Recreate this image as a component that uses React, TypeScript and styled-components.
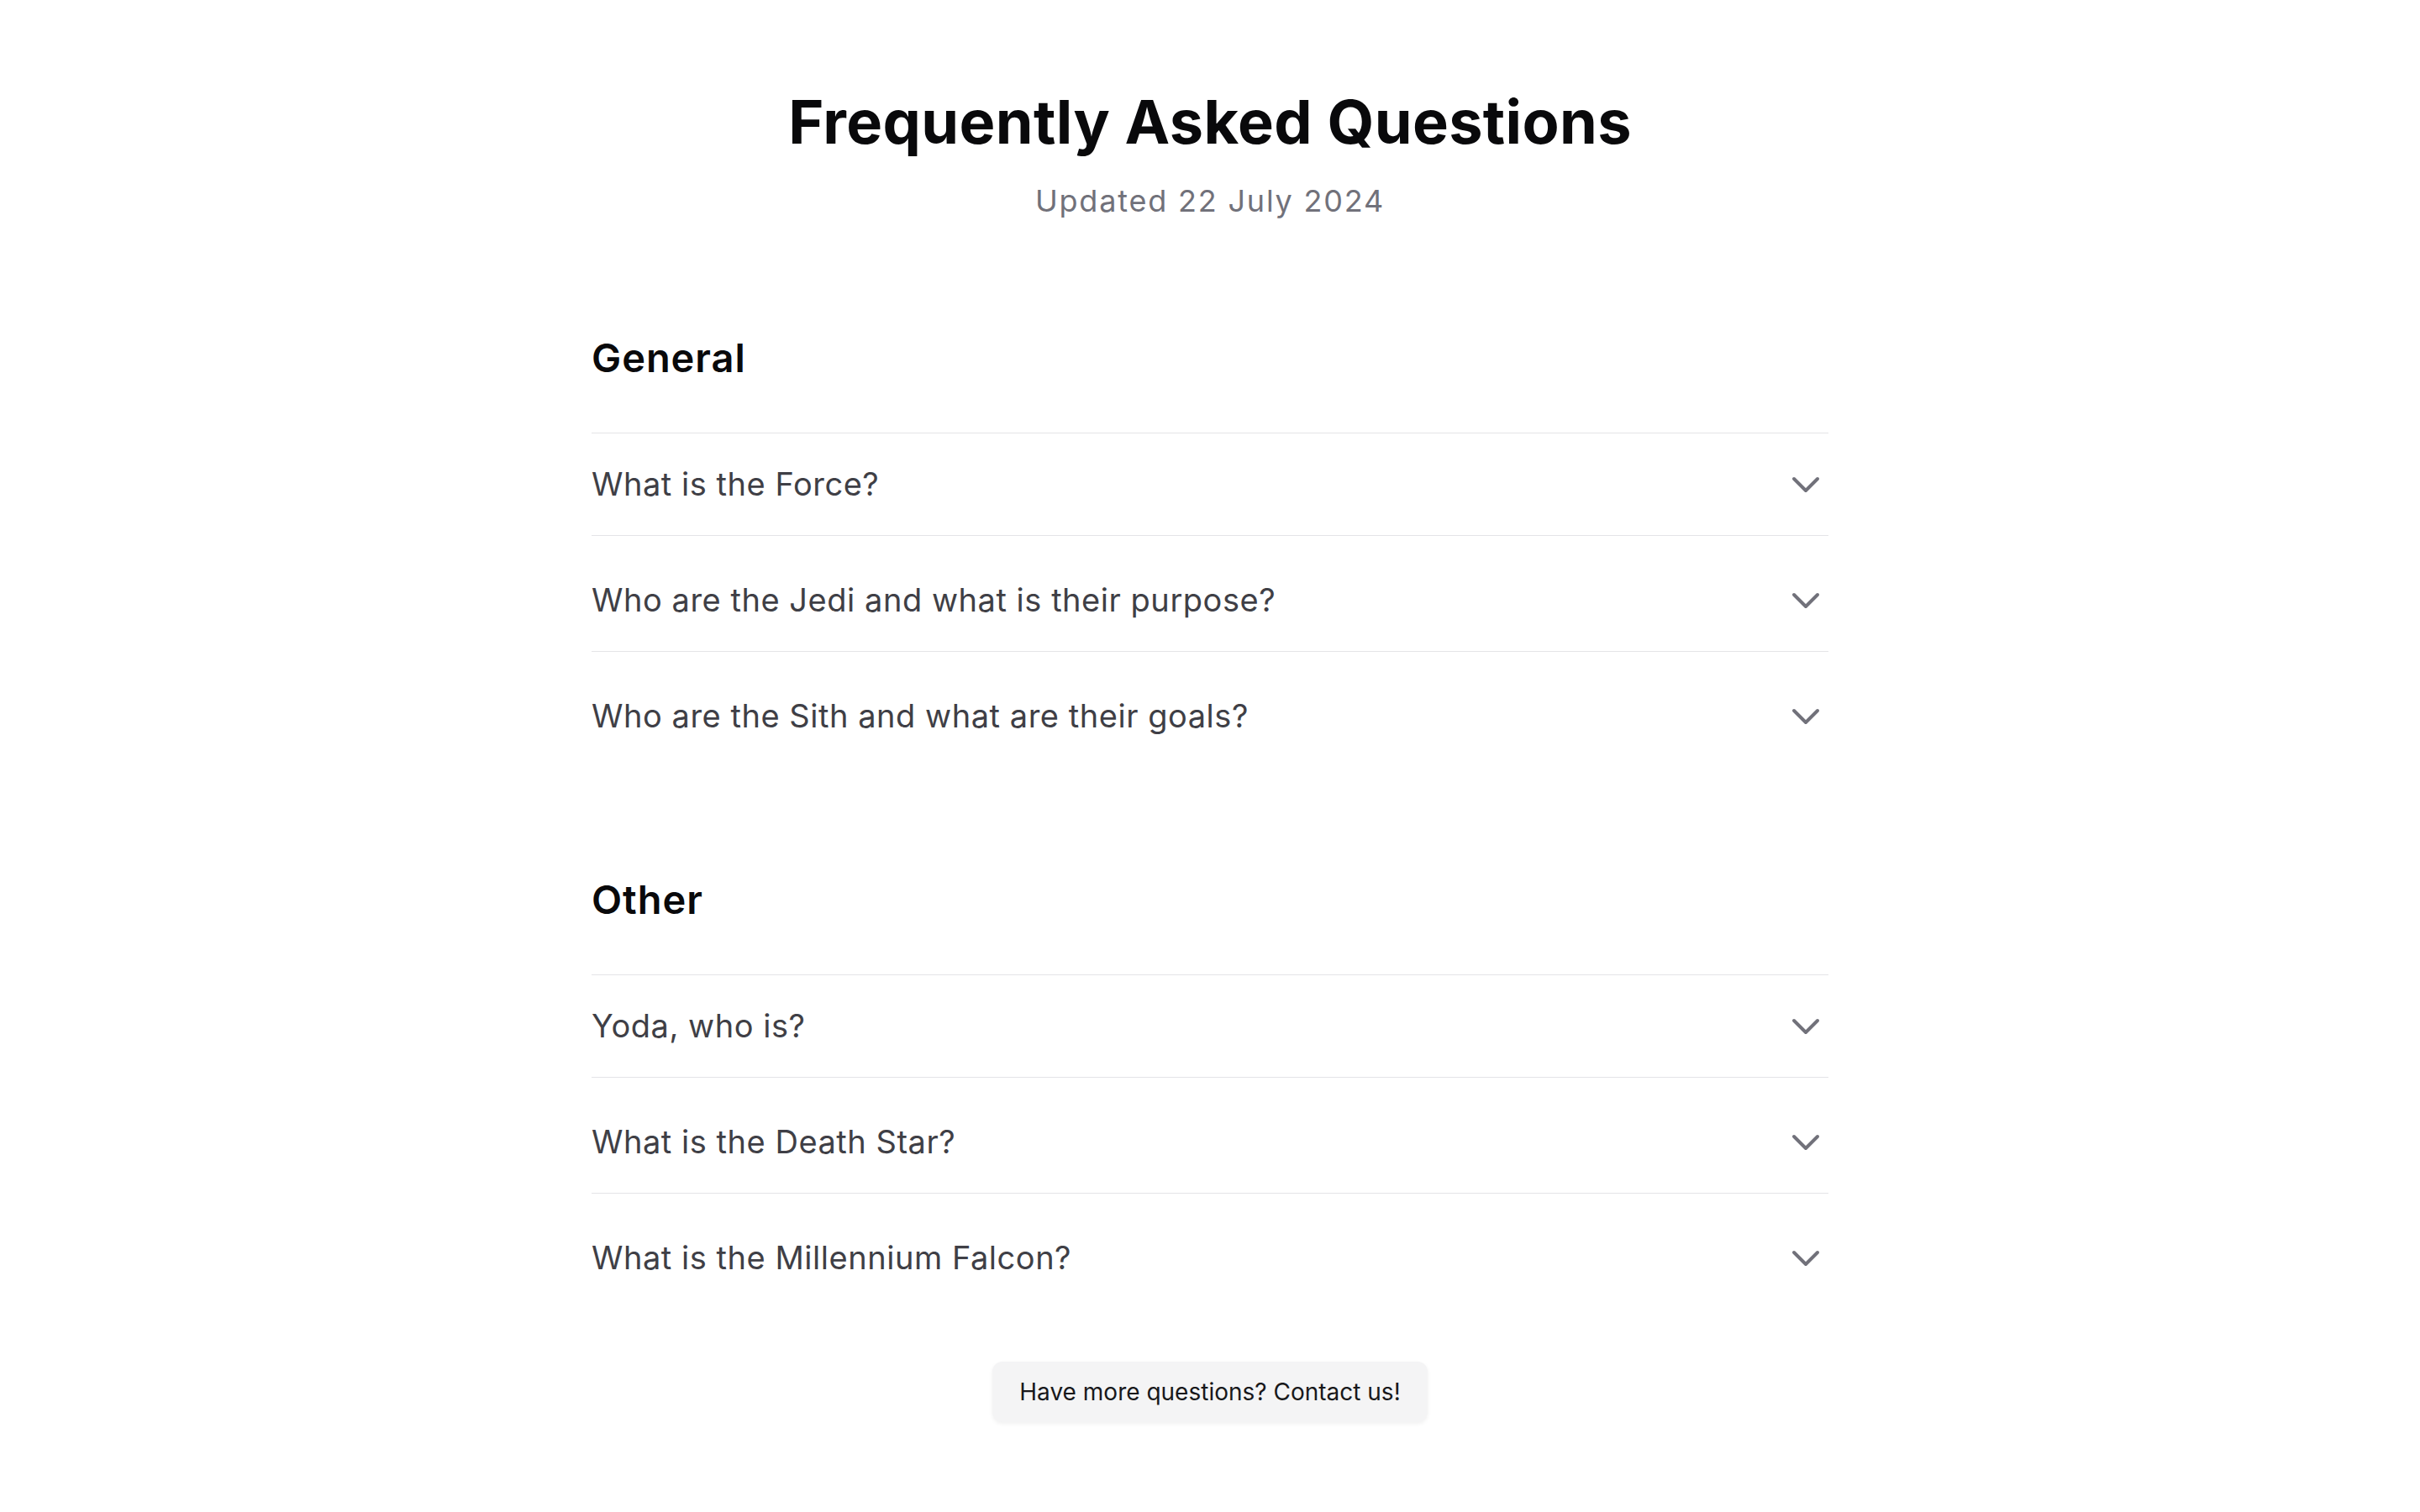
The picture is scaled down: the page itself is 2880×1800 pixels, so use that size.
import React from "react";
import styled, { createGlobalStyle } from "styled-components";

const GlobalStyle = createGlobalStyle`
  html, body {
    margin: 0;
    padding: 0;
    background: #ffffff;
  }
  body {
    font-family: Inter, "Noto Sans", "Liberation Sans", sans-serif;
    color: #09090b;
    -webkit-font-smoothing: antialiased;
  }
  * { box-sizing: border-box; }
`;

const Page = styled.main`
  width: 1472px;
  margin: 0 auto;
  padding: 105px 0 60px;
  display: flex;
  flex-direction: column;
`;

const Header = styled.header`
  display: flex;
  flex-direction: column;
  align-items: center;
  gap: 27px;
`;

const Title = styled.h1`
  margin: 0;
  font-size: 72px;
  line-height: 80px;
  font-weight: 700;
  letter-spacing: 0.005em;
  color: #09090b;
`;

const Updated = styled.p`
  margin: 0;
  font-size: 36px;
  line-height: 54px;
  letter-spacing: 0.05em;
  color: #71717a;
`;

const Section = styled.section<{ $gap: number }>`
  margin-top: ${(p) => p.$gap}px;
  display: flex;
  flex-direction: column;
`;

const SectionTitle = styled.h2`
  margin: 0 0 58px;
  font-size: 47px;
  line-height: 62px;
  font-weight: 600;
  letter-spacing: 0.02em;
  color: #09090b;
`;

const List = styled.div`
  border-top: 1px solid #e4e4e7;
  display: flex;
  flex-direction: column;
`;

const Item = styled.div`
  & + & {
    border-top: 1px solid #e4e4e7;
    padding-top: 16px;
  }
`;

const Trigger = styled.button`
  width: 100%;
  display: flex;
  align-items: center;
  justify-content: space-between;
  padding: 32px 0;
  margin: 0;
  border: none;
  background: transparent;
  font-family: inherit;
  font-size: 38px;
  line-height: 57px;
  font-weight: 400;
  letter-spacing: 0.014em;
  color: #3f3f46;
  text-align: left;
  cursor: pointer;
`;

const Chevron = styled.svg`
  width: 36px;
  height: 36px;
  margin-right: 8px;
  flex-shrink: 0;
  color: #71717a;
`;

const Footer = styled.div`
  margin-top: 63px;
  display: flex;
  justify-content: center;
`;

const ContactButton = styled.button`
  height: 72px;
  padding: 0 32px;
  border: none;
  border-radius: 12px;
  background: #f4f4f5;
  box-shadow: 0 2px 5px rgba(0, 0, 0, 0.06);
  font-family: inherit;
  font-size: 28px;
  font-weight: 400;
  color: #18181b;
  cursor: pointer;
`;

const ChevronIcon = () => (
  <Chevron viewBox="0 0 36 36" fill="none" aria-hidden="true">
    <path
      d="M3 11 L17 25 L31 11"
      stroke="currentColor"
      strokeWidth={4}
      strokeLinecap="round"
      strokeLinejoin="round"
    />
  </Chevron>
);

const sections = [
  {
    title: "General",
    gap: 129,
    items: [
      "What is the Force?",
      "Who are the Jedi and what is their purpose?",
      "Who are the Sith and what are their goals?",
    ],
  },
  {
    title: "Other",
    gap: 127,
    items: [
      "Yoda, who is?",
      "What is the Death Star?",
      "What is the Millennium Falcon?",
    ],
  },
];

export default function App() {
  return (
    <>
      <GlobalStyle />
      <Page>
        <Header>
          <Title>Frequently Asked Questions</Title>
          <Updated>Updated 22 July 2024</Updated>
        </Header>
        {sections.map((s) => (
          <Section key={s.title} $gap={s.gap}>
            <SectionTitle>{s.title}</SectionTitle>
            <List>
              {s.items.map((q) => (
                <Item key={q}>
                  <Trigger type="button">
                    <span>{q}</span>
                    <ChevronIcon />
                  </Trigger>
                </Item>
              ))}
            </List>
          </Section>
        ))}
        <Footer>
          <ContactButton type="button">Have more questions? Contact us!</ContactButton>
        </Footer>
      </Page>
    </>
  );
}
